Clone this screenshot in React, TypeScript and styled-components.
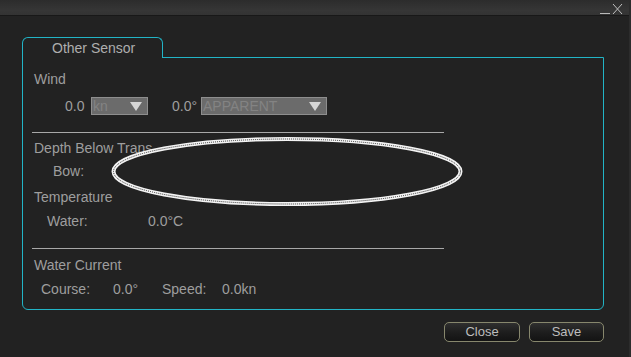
import React from "react";
import styled, { createGlobalStyle } from "styled-components";

const GlobalStyle = createGlobalStyle`
  html, body { margin: 0; padding: 0; background: #222222; }
  body { font-family: "Liberation Sans", Arial, sans-serif; }
  * { box-sizing: border-box; }
`;

const Window = styled.div`
  position: relative;
  width: 631px;
  height: 357px;
  background: #222222;
  display: flex;
  flex-direction: column;
  border-right: 2px solid #2c2c2c;
  overflow: hidden;
`;

const TitleBar = styled.div`
  height: 16px;
  background: linear-gradient(#2c2c2c, #363636 70%, #333333);
  border-bottom: 1px solid #181818;
  display: flex;
  justify-content: flex-end;
  align-items: flex-start;
  padding-right: 6px;
`;

const WinIcon = styled.svg`
  display: block;
`;

const Body = styled.div`
  flex: 1;
  padding: 21px 0 0 22px;
  display: flex;
  flex-direction: column;
`;

const Tab = styled.div`
  width: 141px;
  height: 21px;
  border: 1px solid #22b4c6;
  border-bottom: none;
  border-radius: 6px 6px 0 0;
  background: #222222;
  margin-bottom: -1px;
  position: relative;
  z-index: 1;
  color: #aeaeae;
  font-size: 14px;
  line-height: 16px;
  padding: 2px 0 0 29px;
`;

const Frame = styled.div`
  width: 582px;
  height: 253px;
  border: 1px solid #22b4c6;
  border-radius: 0 0 6px 6px;
  padding: 13px 0 0 11px;
  display: flex;
  flex-direction: column;
`;

const Label = styled.div<{ $mt: number; $indent?: number }>`
  margin-top: ${(p) => p.$mt}px;
  padding-left: ${(p) => p.$indent ?? 0}px;
  height: 16px;
  line-height: 16px;
  font-size: 14px;
  color: #9e9e9e;
  white-space: nowrap;
`;

const Row = styled.div<{ $mt: number; $indent: number; $h?: number }>`
  margin-top: ${(p) => p.$mt}px;
  padding-left: ${(p) => p.$indent}px;
  height: ${(p) => p.$h ?? 16}px;
  display: flex;
  align-items: center;
  font-size: 14px;
  color: #9e9e9e;
  white-space: nowrap;
`;

const Cell = styled.span<{ $w: number; $ml?: number }>`
  display: inline-block;
  width: ${(p) => p.$w}px;
  margin-left: ${(p) => p.$ml ?? 0}px;
  line-height: 16px;
`;

const Select = styled.div<{ $w: number }>`
  width: ${(p) => p.$w}px;
  height: 18px;
  background: #6b6b6b;
  border: 1px solid #8e8e8e;
  display: flex;
  align-items: center;
  justify-content: space-between;
  padding: 0 5px 0 1px;
  color: #838383;
  font-size: 14px;
  line-height: 16px;
`;

const Arrow = styled.span`
  width: 0;
  height: 0;
  border-left: 6px solid transparent;
  border-right: 6px solid transparent;
  border-top: 9px solid #d6d6d6;
`;

const Separator = styled.div<{ $mt: number }>`
  margin-top: ${(p) => p.$mt}px;
  width: 412px;
  margin-left: -2px;
  height: 1px;
  background: #a8a8a8;
`;

const Footer = styled.div`
  margin-top: 12px;
  width: 582px;
  display: flex;
  justify-content: flex-end;
  gap: 9px;
`;

const Button = styled.button<{ $w: number }>`
  width: ${(p) => p.$w}px;
  height: 20px;
  border: 1px solid #87876d;
  border-radius: 5px;
  background: linear-gradient(#2f2f2f, #1e1e1e 50%, #131313);
  color: #bdbdbd;
  font-family: "Liberation Sans", Arial, sans-serif;
  font-size: 13px;
  line-height: 18px;
  padding: 0;
`;

const Highlight = styled.svg`
  position: absolute;
  left: 110px;
  top: 137px;
`;

export default function App() {
  return (
    <>
      <GlobalStyle />
      <Window>
        <TitleBar>
          <WinIcon width="28" height="16" viewBox="0 0 28 16">
            <line x1="5" y1="13.5" x2="15" y2="13.5" stroke="#b8b8b8" strokeWidth="1" />
            <line x1="18" y1="4" x2="27" y2="14" stroke="#c0c0c0" strokeWidth="1" />
            <line x1="27" y1="4" x2="18" y2="14" stroke="#c0c0c0" strokeWidth="1" />
          </WinIcon>
        </TitleBar>
        <Body>
          <Tab>Other Sensor</Tab>
          <Frame>
            <Label $mt={0}>Wind</Label>
            <Row $mt={10} $indent={31} $h={18}>
              <Cell $w={26}>0.0</Cell>
              <Select $w={57}>
                <span>kn</span>
                <Arrow />
              </Select>
              <Cell $w={29} $ml={24}>0.0°</Cell>
              <Select $w={126}>
                <span>APPARENT</span>
                <Arrow />
              </Select>
            </Row>
            <Separator $mt={17} />
            <Label $mt={7}>Depth Below Trans</Label>
            <Row $mt={7} $indent={19}>
              <Cell $w={60}>Bow:</Cell>
            </Row>
            <Label $mt={10}>Temperature</Label>
            <Row $mt={8} $indent={13}>
              <Cell $w={101}>Water:</Cell>
              <Cell $w={60}>0.0°C</Cell>
            </Row>
            <Separator $mt={19} />
            <Label $mt={8}>Water Current</Label>
            <Row $mt={8} $indent={7}>
              <Cell $w={72}>Course:</Cell>
              <Cell $w={49}>0.0°</Cell>
              <Cell $w={60}>Speed:</Cell>
              <Cell $w={60}>0.0kn</Cell>
            </Row>
          </Frame>
          <Footer>
            <Button $w={76}>Close</Button>
            <Button $w={75}>Save</Button>
          </Footer>
        </Body>
        <Highlight width="354" height="70" viewBox="0 0 354 70">
          <ellipse cx="177" cy="34.5" rx="173.5" ry="32.5" fill="none" stroke="#f4f4f4" strokeWidth="4" />
          <ellipse
            cx="177"
            cy="34.5"
            rx="173.5"
            ry="32.5"
            fill="none"
            stroke="#2a2a2a"
            strokeWidth="1"
            strokeDasharray="1 1"
          />
        </Highlight>
      </Window>
    </>
  );
}
